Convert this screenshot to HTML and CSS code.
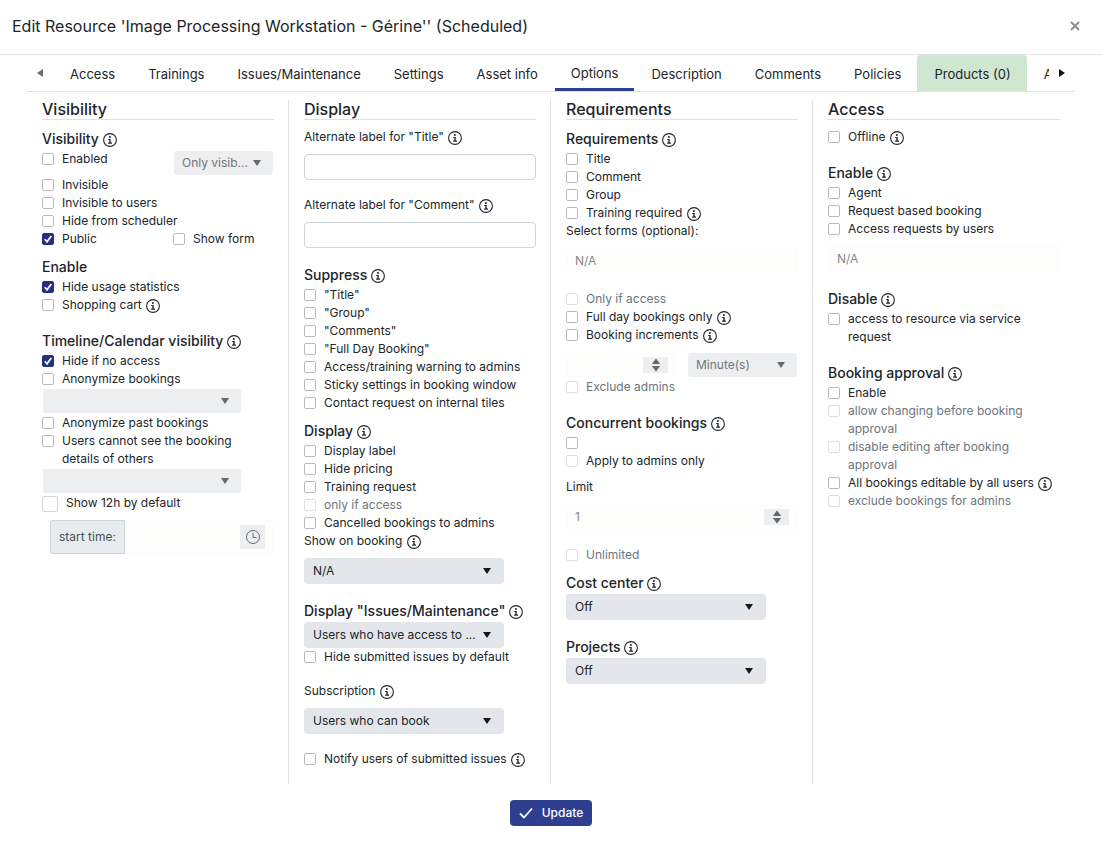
FILE: index.html
```
<!DOCTYPE html>
<html lang="en">
<head>
<meta charset="utf-8">
<meta name="viewport" content="width=device-width, initial-scale=1">
<title>Edit Resource</title>
<link rel="stylesheet" href="styles.css">
</head>
<body>
<svg class="sprite" aria-hidden="true">
  <symbol id="info" viewBox="0 0 14 14">
    <circle cx="7" cy="7" r="6.4" fill="none" stroke="currentColor" stroke-width="1.1"/>
    <circle cx="6.9" cy="3.9" r="1" fill="currentColor"/>
    <path d="M5.2 5.9h2.5v3.7h1.3v1.1H5.1V9.6h1.2V7H5.2z" fill="currentColor"/>
  </symbol>
  <symbol id="updown" viewBox="0 0 10 14">
    <path d="M5 0.5L9.2 6H0.8zM5 13.5L0.8 8h8.4z" fill="currentColor"/>
  </symbol>
</svg>

<header class="dialog-header">
  <h1 class="dialog-title">Edit Resource 'Image Processing Workstation - Gérine'' (Scheduled)</h1>
  <button class="close" type="button" aria-label="Close">
    <svg width="10" height="10" viewBox="0 0 10 10"><path d="M1 1l8 8M9 1l-8 8" stroke="currentColor" stroke-width="2" fill="none"/></svg>
  </button>
</header>

<nav class="tabbar" aria-label="Resource sections">
  <button class="tab-arrow" type="button" aria-label="Previous tabs"><svg width="6" height="8" viewBox="0 0 6 8"><path d="M6 0v8L0 4z" fill="#6b6e72"/></svg></button>
  <div class="tabs">
    <a class="tab" href="#">Access</a>
    <a class="tab" href="#">Trainings</a>
    <a class="tab" href="#">Issues/Maintenance</a>
    <a class="tab" href="#">Settings</a>
    <a class="tab" href="#">Asset info</a>
    <a class="tab tab-active" href="#" aria-current="page">Options</a>
    <a class="tab" href="#">Description</a>
    <a class="tab" href="#">Comments</a>
    <a class="tab" href="#">Policies</a>
    <a class="tab tab-green" href="#">Products (0)</a>
    <a class="tab" href="#">A</a>
  </div>
  <button class="tab-arrow tab-arrow-next" type="button" aria-label="Next tabs"><svg width="6" height="8" viewBox="0 0 6 8"><path d="M0 0v8l6-4z" fill="#111"/></svg></button>
</nav>

<form class="options">
  <div class="columns">
    <section class="column">
      <h2 class="col-title">Visibility</h2>
      <div class="group">
        <h3 class="group-title">Visibility <svg class="info"><use href="#info"/></svg></h3>
        <div class="split split-tall">
          <label class="check"><input type="checkbox"><span>Enabled</span></label>
          <select class="select select-off select-short" aria-label="Enabled for" disabled><option>Only visib...</option></select>
        </div>
        <label class="check"><input type="checkbox"><span>Invisible</span></label>
        <label class="check"><input type="checkbox"><span>Invisible to users</span></label>
        <label class="check"><input type="checkbox"><span>Hide from scheduler</span></label>
        <div class="split">
          <label class="check"><input type="checkbox" checked><span>Public</span></label>
          <label class="check"><input type="checkbox"><span>Show form</span></label>
        </div>
      </div>
      <div class="group">
        <h3 class="group-title">Enable</h3>
        <label class="check"><input type="checkbox" checked><span>Hide usage statistics</span></label>
        <label class="check"><input type="checkbox"><span>Shopping cart <svg class="info"><use href="#info"/></svg></span></label>
      </div>
      <div class="group group-spaced">
        <h3 class="group-title">Timeline/Calendar visibility <svg class="info"><use href="#info"/></svg></h3>
        <label class="check"><input type="checkbox" checked><span>Hide if no access</span></label>
        <label class="check"><input type="checkbox"><span>Anonymize bookings</span></label>
        <select class="select select-off select-blank" aria-label="Anonymize bookings for" disabled><option></option></select>
        <label class="check"><input type="checkbox"><span>Anonymize past bookings</span></label>
        <label class="check check-narrow"><input type="checkbox"><span>Users cannot see the booking details of others</span></label>
        <select class="select select-off select-blank" aria-label="Hide details for" disabled><option></option></select>
        <label class="check check-large"><input type="checkbox"><span>Show 12h by default</span></label>
        <div class="time-field">
          <label class="time-label" for="start">start time:</label>
          <div class="time-box">
            <input class="bare" id="start" type="text" disabled>
            <button class="clock" type="button" aria-label="Pick a time" disabled>
              <svg width="16" height="16" viewBox="0 0 16 16" fill="none" stroke="currentColor"><circle cx="8" cy="8" r="6.5"/><path d="M8 4v4.500h3.500"/></svg>
            </button>
          </div>
        </div>
      </div>
    </section>

    <section class="column">
      <h2 class="col-title">Display</h2>
      <div class="group">
        <label class="text-label" for="alt-title">Alternate label for "Title" <svg class="info"><use href="#info"/></svg></label>
        <input class="text-input" id="alt-title" type="text">
      </div>
      <div class="group group-spaced">
        <label class="text-label" for="alt-comment">Alternate label for "Comment" <svg class="info"><use href="#info"/></svg></label>
        <input class="text-input" id="alt-comment" type="text">
      </div>
      <div class="group group-spaced">
        <h3 class="group-title">Suppress <svg class="info"><use href="#info"/></svg></h3>
        <label class="check"><input type="checkbox"><span>"Title"</span></label>
        <label class="check"><input type="checkbox"><span>"Group"</span></label>
        <label class="check"><input type="checkbox"><span>"Comments"</span></label>
        <label class="check"><input type="checkbox"><span>"Full Day Booking"</span></label>
        <label class="check"><input type="checkbox"><span>Access/training warning to admins</span></label>
        <label class="check"><input type="checkbox"><span>Sticky settings in booking window</span></label>
        <label class="check"><input type="checkbox"><span>Contact request on internal tiles</span></label>
      </div>
      <div class="group">
        <h3 class="group-title">Display <svg class="info"><use href="#info"/></svg></h3>
        <label class="check"><input type="checkbox"><span>Display label</span></label>
        <label class="check"><input type="checkbox"><span>Hide pricing</span></label>
        <label class="check"><input type="checkbox"><span>Training request</span></label>
        <label class="check muted"><input type="checkbox" disabled><span>only if access</span></label>
        <label class="check"><input type="checkbox"><span>Cancelled bookings to admins</span></label>
        <label class="text-label" for="show-on">Show on booking <svg class="info"><use href="#info"/></svg></label>
        <select class="select" id="show-on"><option>N/A</option></select>
      </div>
      <div class="group group-spaced">
        <h3 class="group-title">Display "Issues/Maintenance" <svg class="info"><use href="#info"/></svg></h3>
        <select class="select" aria-label="Display Issues/Maintenance"><option>Users who have access to ...</option></select>
        <label class="check"><input type="checkbox"><span>Hide submitted issues by default</span></label>
      </div>
      <div class="group group-spaced">
        <label class="text-label" for="subscription">Subscription <svg class="info"><use href="#info"/></svg></label>
        <select class="select" id="subscription"><option>Users who can book</option></select>
      </div>
      <div class="group group-spaced">
        <label class="check"><input type="checkbox"><span>Notify users of submitted issues <svg class="info"><use href="#info"/></svg></span></label>
      </div>
    </section>

    <section class="column">
      <h2 class="col-title">Requirements</h2>
      <div class="group">
        <h3 class="group-title">Requirements <svg class="info"><use href="#info"/></svg></h3>
        <label class="check"><input type="checkbox"><span>Title</span></label>
        <label class="check"><input type="checkbox"><span>Comment</span></label>
        <label class="check"><input type="checkbox"><span>Group</span></label>
        <label class="check"><input type="checkbox"><span>Training required <svg class="info"><use href="#info"/></svg></span></label>
        <label class="text-label" for="forms">Select forms (optional):</label>
        <input class="field-off" id="forms" type="text" value="N/A" disabled>
      </div>
      <div class="group group-spaced">
        <label class="check muted"><input type="checkbox" disabled><span>Only if access</span></label>
        <label class="check"><input type="checkbox"><span>Full day bookings only <svg class="info"><use href="#info"/></svg></span></label>
        <label class="check"><input type="checkbox"><span>Booking increments <svg class="info"><use href="#info"/></svg></span></label>
        <div class="increments">
          <div class="stepper">
            <input class="bare" type="number" aria-label="Booking increment" disabled>
            <button class="spin" type="button" aria-label="Change increment" disabled><svg width="10" height="14"><use href="#updown"/></svg></button>
          </div>
          <select class="select select-off select-unit" aria-label="Increment unit" disabled><option>Minute(s)</option></select>
        </div>
        <label class="check muted"><input type="checkbox" disabled><span>Exclude admins</span></label>
      </div>
      <div class="group group-spaced">
        <h3 class="group-title">Concurrent bookings <svg class="info"><use href="#info"/></svg></h3>
        <label class="check"><input type="checkbox" aria-label="Concurrent bookings"><span></span></label>
        <label class="check"><input type="checkbox" disabled><span>Apply to admins only</span></label>
      </div>
      <div class="group">
        <label class="text-label" for="limit">Limit</label>
        <div class="stepper">
          <input class="bare" id="limit" type="number" value="1" disabled>
          <button class="spin" type="button" aria-label="Change limit" disabled><svg width="10" height="14"><use href="#updown"/></svg></button>
        </div>
      </div>
      <div class="group group-spaced">
        <label class="check muted"><input type="checkbox" disabled><span>Unlimited</span></label>
      </div>
      <div class="group">
        <h3 class="group-title">Cost center <svg class="info"><use href="#info"/></svg></h3>
        <select class="select" aria-label="Cost center"><option>Off</option></select>
      </div>
      <div class="group group-spaced">
        <h3 class="group-title">Projects <svg class="info"><use href="#info"/></svg></h3>
        <select class="select" aria-label="Projects"><option>Off</option></select>
      </div>
    </section>

    <section class="column">
      <h2 class="col-title">Access</h2>
      <div class="group">
        <label class="check"><input type="checkbox"><span>Offline <svg class="info"><use href="#info"/></svg></span></label>
      </div>
      <div class="group group-spaced">
        <h3 class="group-title">Enable <svg class="info"><use href="#info"/></svg></h3>
        <label class="check"><input type="checkbox"><span>Agent</span></label>
        <label class="check"><input type="checkbox"><span>Request based booking</span></label>
        <label class="check"><input type="checkbox"><span>Access requests by users</span></label>
        <input class="field-off" type="text" value="N/A" aria-label="Request form" disabled>
      </div>
      <div class="group group-spaced">
        <h3 class="group-title">Disable <svg class="info"><use href="#info"/></svg></h3>
        <label class="check"><input type="checkbox"><span>access to resource via service request</span></label>
      </div>
      <div class="group group-spaced">
        <h3 class="group-title">Booking approval <svg class="info"><use href="#info"/></svg></h3>
        <label class="check"><input type="checkbox"><span>Enable</span></label>
        <label class="check muted"><input type="checkbox" disabled><span>allow changing before booking approval</span></label>
        <label class="check muted"><input type="checkbox" disabled><span>disable editing after booking approval</span></label>
        <label class="check"><input type="checkbox"><span>All bookings editable by all users <svg class="info"><use href="#info"/></svg></span></label>
        <label class="check muted"><input type="checkbox" disabled><span>exclude bookings for admins</span></label>
      </div>
    </section>
  </div>

  <footer class="actions">
    <button class="update" type="submit">
      <svg width="14" height="12" viewBox="0 0 14 12"><path d="M1 6.500l4 4L13 1.500" fill="none" stroke="currentColor" stroke-width="1.800"/></svg>
      Update
    </button>
  </footer>
</form>
</body>
</html>
```
FILE: styles.css
```
*, *::before, *::after { box-sizing: border-box; }

body {
  margin: 0;
  background: #fff;
  color: #212529;
  font: 400 12px/18px Inter, "Liberation Sans", sans-serif;
}

button, input, select { font: inherit; color: inherit; margin: 0; }
button { border: 0; padding: 0; background: none; }

.sprite { position: absolute; width: 0; height: 0; }

.dialog-header {
  display: flex;
  align-items: center;
  justify-content: space-between;
  padding: 12px 22px 14px 12px;
  border-bottom: 1px solid #dee2e6;
}
.dialog-title { margin: 0; font-size: 16px; line-height: 28px; font-weight: 400; }
.close { display: flex; color: #8c8c8c; }

/* Tabs */
.tabbar {
  display: flex;
  margin: 0 27px;
  border-bottom: 1px solid #dee2e6;
}
.tab-arrow { flex: none; width: 26px; display: flex; align-items: center; justify-content: center; }
.tab-arrow-next { justify-content: flex-end; padding-right: 10px; }
.tabs { flex: 1; min-width: 0; display: flex; overflow: hidden; }
.tab {
  flex: none;
  padding: 10px 16px 8px 17px;
  color: inherit;
  font-size: 13px;
  text-decoration: none;
  white-space: nowrap;
}
.tab-active {
  margin-left: 1px;
  padding: 9px 16px 6px;
  border-bottom: 3px solid #2f3f90;
}
.tab-green { background: #cfe7d1; border-radius: 4px 4px 0 0; }

/* Columns */
.columns {
  display: grid;
  grid-template-columns: repeat(4, minmax(0, 1fr));
  margin: 8px 27px 0;
}
.column { padding: 0 14px 16px 15px; border-right: 1px solid #dee2e6; }
.column:last-child { border-right-color: transparent; }
.col-title {
  margin: 0;
  font-size: 16px;
  line-height: 19px;
  font-weight: 500;
  border-bottom: 1px solid #dee2e6;
}
.group { display: flex; flex-direction: column; margin-top: 8px; }
.group-spaced { margin-top: 16px; }
.group-title { margin: 0; font-size: 14px; line-height: 22px; font-weight: 500; }
.info { width: 14px; height: 14px; margin: 0 0 -4px 1px; vertical-align: baseline; }
.group-title .info { margin-bottom: -3px; margin-left: 0; }
.text-label { margin-bottom: 8px; }

/* Tick boxes */
.check { display: flex; gap: 8px; height: auto; min-height: 18px; }
.check input {
  flex: none;
  appearance: none;
  width: 12px;
  height: 12px;
  margin-top: 3px;
  border: 1px solid #b9babc;
  border-radius: 2px;
  background: #fff center / 10px 10px no-repeat;
}
.check input:checked {
  border-color: #262f80;
  background-color: #262f80;
  background-image: url("data:image/svg+xml,%3Csvg xmlns='http://www.w3.org/2000/svg' viewBox='0 0 10 10'%3E%3Cpath d='M1.800 5.300l2.200 2.500L8.300 1.900' fill='none' stroke='white' stroke-width='1.700'/%3E%3C/svg%3E");
}
.check input:disabled { border-color: #dfdfe0; }
.muted { color: #6c757d; }
.check-narrow { max-width: 200px; }
.check-large input { width: 16px; height: 16px; margin-top: 2px; border-color: #ced4da; }

.split { display: grid; grid-template-columns: 131px 1fr; }
.split-tall { min-height: 26px; align-items: start; }

/* Drop-downs */
.select {
  appearance: none;
  width: 200px;
  max-width: 100%;
  height: 26px;
  padding: 0 24px 0 9px;
  border: 0;
  border-radius: 4px;
  background: #e3e6ea url("data:image/svg+xml,%3Csvg xmlns='http://www.w3.org/2000/svg' viewBox='0 0 8 6'%3E%3Cpath d='M0 0h8L4 6z' fill='%2315181b'/%3E%3C/svg%3E") right 13px center / 8px 6px no-repeat;
}
.select-off {
  height: 24px;
  padding-left: 8px;
  border-radius: 3px;
  color: #73777b;
  opacity: 1;
  background-color: #edeef0;
  background-image: url("data:image/svg+xml,%3Csvg xmlns='http://www.w3.org/2000/svg' viewBox='0 0 8 6'%3E%3Cpath d='M0 0h8L4 6z' fill='%2366696c'/%3E%3C/svg%3E");
  background-position: right 12px center;
}
.select-short { width: 99px; margin: 1px 1px 0 0; padding-right: 16px; justify-self: end; }
.select-blank { width: 198px; margin: 1px; }
.select-unit { width: auto; }

/* Text boxes */
.text-input {
  width: 100%;
  height: 26px;
  padding: 0 8px;
  border: 1px solid #ced4da;
  border-radius: 4px;
  background: #fff;
}
.field-off, .stepper, .time-box { background: #fefefd; border: 1px solid #fcfcfb; border-radius: 3px; }
.field-off { height: 24px; margin: 0 1px 2px; padding: 0 7px; color: #85888b; }
.check + .field-off { margin-top: 8px; }
.stepper { display: flex; align-items: center; min-width: 0; height: 24px; margin: 1px; padding: 0 7px; }
.bare {
  flex: 1;
  min-width: 0;
  padding: 0;
  border: 0;
  background: none;
  color: #85888b;
  appearance: textfield;
}
.bare::-webkit-inner-spin-button { appearance: none; margin: 0; }
.spin {
  display: flex;
  align-items: center;
  justify-content: center;
  width: 25px;
  height: 16px;
  background: #edeef0;
  color: #66696c;
}
.increments { display: grid; grid-template-columns: 1fr 1fr; gap: 12px; margin: 9px 1px 1px; }
.increments .stepper { margin: 0; }

.time-field { display: flex; height: 34px; margin: 8px 1px 0 8px; }
.time-label {
  display: flex;
  align-items: center;
  padding: 0 8px;
  border: 1px solid #ced4da;
  border-radius: 3px 0 0 3px;
  background: #e9ecef;
  color: #495057;
}
.time-box { flex: 1; min-width: 0; display: flex; align-items: center; padding: 0 7px; border-left: 0; }
.clock {
  display: flex;
  align-items: center;
  justify-content: center;
  width: 25px;
  height: 24px;
  background: #edeef0;
  color: #66696c;
}

.actions { display: flex; justify-content: center; padding: 16px 0 20px; }
.update {
  display: flex;
  align-items: center;
  gap: 9px;
  height: 26px;
  padding: 0 9px;
  border-radius: 4px;
  background: #2f3f90;
  color: #fff;
  font-weight: 500;
}
```
